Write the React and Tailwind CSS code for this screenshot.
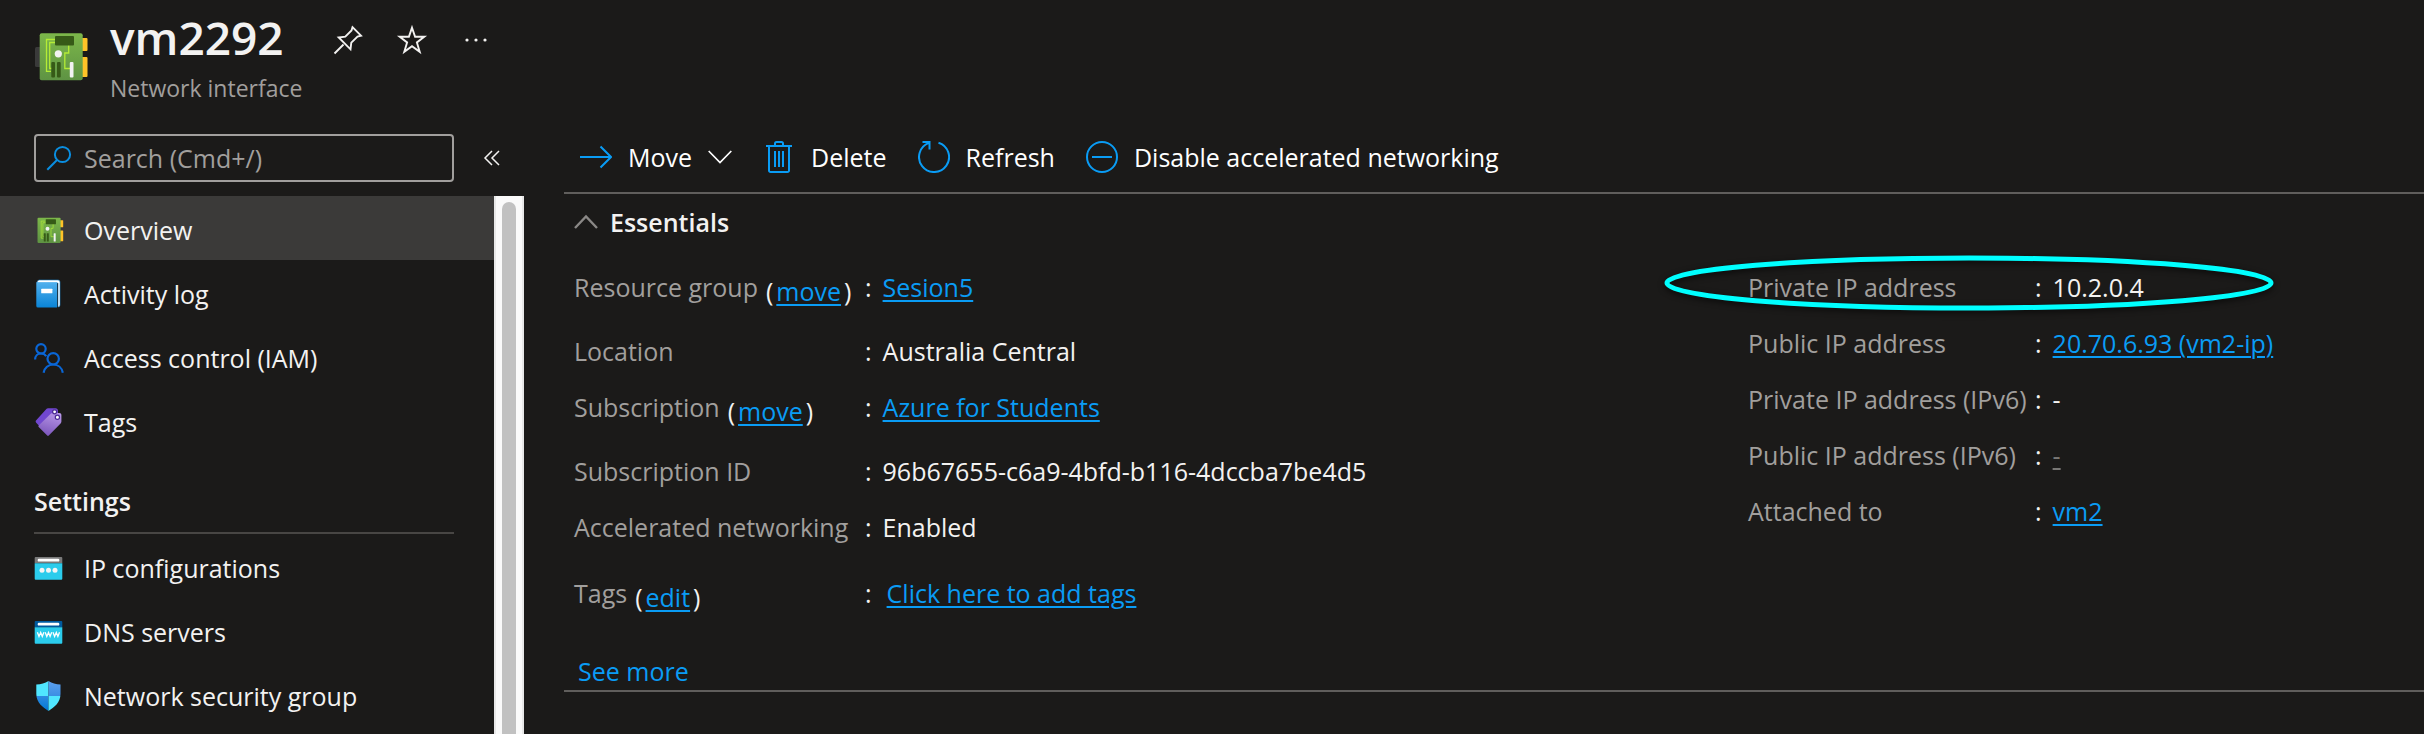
import React from "react";

function NicIcon({ className, id }) {
  return (
    <svg viewBox="0 0 54 50" className={className} aria-hidden="true">
      <defs>
        <linearGradient id={id} x1="0" y1="0" x2="0" y2="1">
          <stop offset="0" stopColor="#7cb74a" />
          <stop offset="1" stopColor="#5e9343" />
        </linearGradient>
      </defs>
      <rect x="0" y="15" width="8" height="20" rx="1.5" fill="#3a3a3a" />
      <rect x="46" y="6" width="6.5" height="13" rx="1" fill="#ffc328" />
      <rect x="46" y="25" width="6.5" height="20" rx="1" fill="#ffc328" />
      <rect x="4.7" y="1.3" width="43" height="47" rx="2" fill={`url(#${id})`} />
      <path
        d="M20 7.5H11.5V39.3H16M20 10.5H14.7V36.5H17M33.7 12V21H29.8V36.5H35"
        fill="none"
        stroke="#b4ec36"
        strokeWidth="1.3"
      />
      <rect x="20" y="4" width="19" height="9.5" rx="1" fill="#365a17" />
      <circle cx="23.3" cy="21.8" r="3.6" fill="#f2f2f2" />
      <rect x="16.3" y="30" width="3.7" height="15.5" rx="1" fill="#365a17" />
      <rect x="22" y="30" width="3.7" height="15.5" rx="1" fill="#365a17" />
      <rect x="34.8" y="30" width="3.7" height="15.5" rx="1" fill="#f2f2f2" />
    </svg>
  );
}

function LogIcon() {
  return (
    <svg viewBox="0 0 30 30" className="size-[30px]" aria-hidden="true">
      <defs>
        <linearGradient id="log" x1="0" y1="0" x2="0" y2="1">
          <stop offset="0" stopColor="#50b0ee" />
          <stop offset="1" stopColor="#0a84d6" />
        </linearGradient>
      </defs>
      <path d="M5 1h19a2 2 0 0 1 2 2v23a2 2 0 0 1-2 2V4H3a3 3 0 0 1 2-3z" fill="#fff" stroke="#1b7fc6" strokeWidth="0.6" />
      <path d="M2.3 3.2h20.7v25.4H4a1.7 1.7 0 0 1-1.7-1.7z" fill="url(#log)" />
      <rect x="7.2" y="9.7" width="11.2" height="4.6" rx="0.6" fill="#fff" />
    </svg>
  );
}

function PeopleIcon() {
  return (
    <svg viewBox="0 0 30 30" className="size-[30px]" fill="none" stroke="#0a66d6" strokeWidth="2.2" aria-hidden="true">
      <circle cx="7" cy="5.8" r="4.7" />
      <path d="M1.1 16.6c0-3.6 2.5-6.1 5.9-6.1 2.3 0 4.2 1 5.2 2.8" />
      <circle cx="19.2" cy="15.8" r="5.7" />
      <path d="M9.6 29.7c.8-4.9 4.8-8.2 9.6-8.2s8.7 3.3 9.6 8.2" />
    </svg>
  );
}

function TagIcon() {
  return (
    <svg viewBox="0 0 30 30" className="size-[30px]" aria-hidden="true">
      <defs>
        <linearGradient id="tag" x1="0.7" y1="0" x2="0.4" y2="1">
          <stop offset="0" stopColor="#b796e6" />
          <stop offset="1" stopColor="#7b55bb" />
        </linearGradient>
      </defs>
      <path d="M14 1.2h7.6c1.4 0 2.4 1 2.4 2.4V10L8.5 22.5 2 15.4c-.5-.6-.5-1.3 0-1.8L12.6 1.8c.4-.4.8-.6 1.4-.6z" fill="#7147cf" />
      <path d="M18.4 6h7c1.2 0 2 .9 2 2v6.4c0 .8-.3 1.5-.8 2L14.8 28.6c-.5.5-1.1.5-1.6 0L4.7 20c-.5-.5-.5-1.1 0-1.6L16.7 6.7c.5-.5 1-.7 1.7-.7z" fill="url(#tag)" />
      <circle cx="20.6" cy="4.8" r="2" fill="#fff" stroke="#4b2a94" strokeWidth="1.2" />
      <circle cx="23.4" cy="10.3" r="2.1" fill="#fff" stroke="#4b2a94" strokeWidth="1.2" />
    </svg>
  );
}

function IpIcon() {
  return (
    <svg viewBox="0 0 30 30" className="size-[30px]" aria-hidden="true">
      <path d="M.7 10.3V5A1 1 0 0 1 1.7 4h25.6a1 1 0 0 1 1 1v5.3z" fill="#7a7a7a" />
      <path d="M.7 10.2h27.6v15.6a1 1 0 0 1-1 1H1.7a1 1 0 0 1-1-1z" fill="#2bccec" />
      <rect x="3.7" y="5.8" width="21.6" height="2.8" rx="1.2" fill="#fff" />
      <circle cx="8" cy="17.2" r="2.5" fill="#f5f5f5" />
      <circle cx="14.5" cy="17.2" r="2.5" fill="#f5f5f5" />
      <circle cx="21" cy="17.2" r="2.5" fill="#f5f5f5" />
    </svg>
  );
}

function DnsIcon() {
  return (
    <svg viewBox="0 0 30 30" className="size-[30px]" aria-hidden="true">
      <path d="M.7 10.3V5A1 1 0 0 1 1.7 4h25.6a1 1 0 0 1 1 1v5.3z" fill="#005a9e" />
      <path d="M.7 10.2h27.6v15.6a1 1 0 0 1-1 1H1.7a1 1 0 0 1-1-1z" fill="#2bccec" />
      <rect x="3.7" y="5.8" width="21.6" height="2.8" rx="1.2" fill="#fff" />
      <path
        d="M3.4 15.3l1.6 4.2 1.7-4 1.6 4 1.6-4.2M11.2 15.3l1.6 4.2 1.7-4 1.6 4 1.6-4.2M19 15.3l1.6 4.2 1.7-4 1.6 4 1.6-4.2"
        fill="none"
        stroke="#fff"
        strokeWidth="1.3"
      />
    </svg>
  );
}

function ShieldIcon() {
  return (
    <svg viewBox="0 0 30 30" className="size-[30px]" aria-hidden="true">
      <defs>
        <clipPath id="shield">
          <path d="M14.5 0c3.7 2.3 7.2 3.3 12 3.5V13c0 8.5-6.5 13.5-12 17-5.5-3.5-12.2-8.5-12.2-17V3.5C7.2 3.3 10.8 2.3 14.5 0z" />
        </clipPath>
        <linearGradient id="shieldTop" x1="0" y1="0" x2="0" y2="1">
          <stop offset="0" stopColor="#5ea0ef" />
          <stop offset="1" stopColor="#3b8fe3" />
        </linearGradient>
        <linearGradient id="shieldBottom" x1="0" y1="0" x2="0" y2="1">
          <stop offset="0" stopColor="#2e8ae0" />
          <stop offset="1" stopColor="#0078d4" />
        </linearGradient>
      </defs>
      <g clipPath="url(#shield)">
        <rect width="14.5" height="15" fill="#50e6ff" />
        <rect x="14.5" width="15" height="15" fill="url(#shieldTop)" />
        <rect y="15" width="14.5" height="15" fill="url(#shieldBottom)" />
        <rect x="14.5" y="15" width="15" height="15" fill="#50e6ff" />
      </g>
    </svg>
  );
}

function NavItem({ icon, children, active }) {
  return (
    <li>
      <a
        href="#"
        aria-current={active ? "page" : undefined}
        className={
          active
            ? "flex h-16 items-center gap-5 bg-[#3b3a39] pl-[34px] pt-1"
            : "flex h-16 items-center gap-5 pl-[34px] pt-1"
        }
      >
        <span className="flex size-[30px] items-center justify-center">{icon}</span>
        <span>{children}</span>
      </a>
    </li>
  );
}

function Link({ children }) {
  return (
    <a href="#" className="text-[#0a9cf5] underline decoration-2 underline-offset-3">
      {children}
    </a>
  );
}

function Property({ label, action, height = "h-14", wide, children }) {
  return (
    <div className={`flex ${height}`}>
      <dt className={wide ? "flex w-[291px] gap-2 text-[#a19f9d]" : "flex w-[287px] text-[#a19f9d]"}>
        {label}
        {action && (
          <span className="flex gap-[3px] pt-1 text-[#f3f2f1]">
            (<Link>{action}</Link>)
          </span>
        )}
      </dt>
      <dd className="flex gap-[11px]">
        <span>:</span>
        {children}
      </dd>
    </div>
  );
}

function ToolButton({ icon, children }) {
  return (
    <button type="button" className="flex items-center gap-4 text-white">
      {icon}
      {children}
    </button>
  );
}

const tool = "size-8 fill-none stroke-[#0a9cf5] stroke-2";

export default function App() {
  return (
    <div className="flex h-screen flex-col overflow-hidden bg-[#1b1a19] font-['Open_Sans','Noto_Sans',sans-serif] text-[25px] leading-8 text-[#f3f2f1]">
      <header className="flex h-[118px] shrink-0 pl-[35px] pt-2">
        <NicIcon id="nicLarge" className="mt-6 h-[50px] w-[54px]" />
        <div className="ml-[21px]">
          <div className="flex items-center">
            <h1 className="text-[46px] leading-[58px] font-semibold">vm2292</h1>
            <div className="mt-[6px] ml-12 flex items-center gap-8">
              <button type="button" aria-label="Pin" className="flex size-8 items-center justify-center">
                <svg viewBox="0 0 30 30" className="size-[30px] fill-none stroke-[#f3f2f1]" strokeWidth="1.9">
                  <path d="M1.5 28.5L10.5 19.5M19.5 2.2L28 10.7L24.5 11.5L18.3 17.7L17.5 24.3L5.7 12.5L12.3 11.7L18.5 5.5Z" />
                </svg>
              </button>
              <button type="button" aria-label="Favorite" className="flex size-8 items-center justify-center">
                <svg viewBox="0 0 30 30" className="size-8 fill-none stroke-[#f3f2f1]" strokeWidth="1.8">
                  <path d="M15 3.5L17.9 12H26.5L19.6 17.3L22.2 26L15 20.8L7.8 26L10.4 17.3L3.5 12H12.1Z" />
                </svg>
              </button>
              <button type="button" aria-label="More" className="flex size-8 items-center justify-center">
                <svg viewBox="0 0 24 24" className="size-6 fill-[#f3f2f1]">
                  <circle cx="3" cy="12" r="1.6" />
                  <circle cx="12" cy="12" r="1.6" />
                  <circle cx="21" cy="12" r="1.6" />
                </svg>
              </button>
            </div>
          </div>
          <p className="mt-[6px] text-[23px] text-[#a19f9d]">Network interface</p>
        </div>
      </header>

      <div className="flex min-h-0 flex-1">
        <aside className="flex w-[524px] shrink-0 flex-col">
          <div className="flex h-[78px] shrink-0 items-start pl-[34px] pt-4">
            <div className="flex h-12 w-[420px] items-center gap-3 rounded-sm border-2 border-[#a19f9d] pl-[10px]">
              <svg viewBox="0 0 26 26" className="size-[26px] shrink-0 fill-none stroke-[#0a8ee0] stroke-2" aria-hidden="true">
                <circle cx="16.5" cy="9.5" r="7.6" />
                <path d="M11 15L1.3 24.7" />
              </svg>
              <input
                type="text"
                aria-label="Search"
                placeholder="Search (Cmd+/)"
                className="min-w-0 flex-1 bg-transparent outline-none placeholder:text-[#a19f9d]"
              />
            </div>
            <button type="button" aria-label="Collapse menu" className="ml-[29px] flex h-12 items-center">
              <svg viewBox="0 0 18 18" className="size-[18px] fill-none stroke-[#f3f2f1]" strokeWidth="1.5">
                <path d="M9 2L2 9L9 16M16 2L9 9L16 16" />
              </svg>
            </button>
          </div>
          <div className="flex min-h-0 flex-1">
            <nav className="min-w-0 flex-1 overflow-hidden">
              <ul>
                <NavItem active icon={<NicIcon id="nicSmall" className="h-[27px] w-[29px]" />}>Overview</NavItem>
                <NavItem icon={<LogIcon />}>Activity log</NavItem>
                <NavItem icon={<PeopleIcon />}>Access control (IAM)</NavItem>
                <NavItem icon={<TagIcon />}>Tags</NavItem>
              </ul>
              <h2 className="mr-10 ml-[34px] h-[82px] border-b-2 border-[#484644] pt-[33px] font-semibold">Settings</h2>
              <ul>
                <NavItem icon={<IpIcon />}>IP configurations</NavItem>
                <NavItem icon={<DnsIcon />}>DNS servers</NavItem>
                <NavItem icon={<ShieldIcon />}>Network security group</NavItem>
              </ul>
            </nav>
            <div className="w-[30px] border-x-2 border-[#e8e8e8] bg-[#fafafa] px-[6px] pt-[6px]">
              <div className="h-full rounded-t-full bg-[#c1c1c1]" />
            </div>
          </div>
        </aside>

        <main className="ml-10 min-w-0 flex-1">
          <div className="flex h-[76px] items-center gap-[31px] border-b-2 border-[#605e5c] pl-4 pt-1">
            <ToolButton
              icon={
                <svg viewBox="0 0 32 32" className={tool}>
                  <path d="M0 16H31M20.5 5.5L31 16L20.5 26.5" />
                </svg>
              }
            >
              Move
              <svg viewBox="0 0 24 14" className="h-[14px] w-6 fill-none stroke-white" strokeWidth="1.7">
                <path d="M.7 1L12 12.5L23.3 1" />
              </svg>
            </ToolButton>
            <ToolButton
              icon={
                <svg viewBox="0 0 32 32" className={tool}>
                  <path d="M3 5H29M6 5V29.5A1.5 1.5 0 0 0 7.5 31H24.5A1.5 1.5 0 0 0 26 29.5V5M12 5V2.5A1.5 1.5 0 0 1 13.5 1H18.5A1.5 1.5 0 0 1 20 2.5V5M12 10V26M16 10V26M20 10V26" />
                </svg>
              }
            >
              Delete
            </ToolButton>
            <ToolButton
              icon={
                <svg viewBox="0 0 32 32" className={tool}>
                  <path d="M20.5 1.7A15 15 0 1 1 11 1.9M4.5 1H11.5V8.5" />
                </svg>
              }
            >
              Refresh
            </ToolButton>
            <ToolButton
              icon={
                <svg viewBox="0 0 32 32" className={tool}>
                  <circle cx="16" cy="16" r="15" />
                  <path d="M6 16H26" />
                </svg>
              }
            >
              Disable accelerated networking
            </ToolButton>
          </div>

          <section className="border-b-2 border-[#605e5c] pl-[10px]">
            <button type="button" className="flex h-[77px] items-start gap-3 pt-3 font-semibold">
              <svg viewBox="0 0 24 32" className="h-8 w-6 fill-none stroke-[#8a8886]" strokeWidth="2.4">
                <path d="M1 22L12 10.5L23 22" />
              </svg>
              Essentials
            </button>
            <div className="grid grid-cols-[33fr_19fr]">
              <dl>
                <Property wide height="h-16" label="Resource group" action="move"><Link>Sesion5</Link></Property>
                <Property wide label="Location">Australia Central</Property>
                <Property wide height="h-16" label="Subscription" action="move"><Link>Azure for Students</Link></Property>
                <Property wide label="Subscription ID">96b67655-c6a9-4bfd-b116-4dccba7be4d5</Property>
                <Property wide height="h-[66px]" label="Accelerated networking">Enabled</Property>
                <Property wide height="h-16" label="Tags" action="edit">
                  <span className="pl-1"><Link>Click here to add tags</Link></span>
                </Property>
              </dl>
              <dl>
                <div className="relative">
                  <Property label="Private IP address">10.2.0.4</Property>
                  <svg
                    viewBox="0 0 620 68"
                    className="pointer-events-none absolute -top-[22px] -left-[89px] h-[68px] w-[620px] fill-none stroke-[#00ffff] drop-shadow-[0_2px_3px_rgba(0,0,0,0.7)]"
                    strokeWidth="5"
                    aria-hidden="true"
                  >
                    <ellipse cx="310" cy="34" rx="302" ry="25" />
                  </svg>
                </div>
                <Property label="Public IP address"><Link>20.70.6.93 (vm2-ip)</Link></Property>
                <Property label="Private IP address (IPv6)">-</Property>
                <Property label="Public IP address (IPv6)">
                  <span className="text-[#797775] underline decoration-2 underline-offset-3">-</span>
                </Property>
                <Property label="Attached to"><Link>vm2</Link></Property>
              </dl>
            </div>
            <a href="#" className="mt-[14px] mb-[3px] ml-1 inline-block text-[#0a9cf5]">See more</a>
          </section>
        </main>
      </div>
    </div>
  );
}
